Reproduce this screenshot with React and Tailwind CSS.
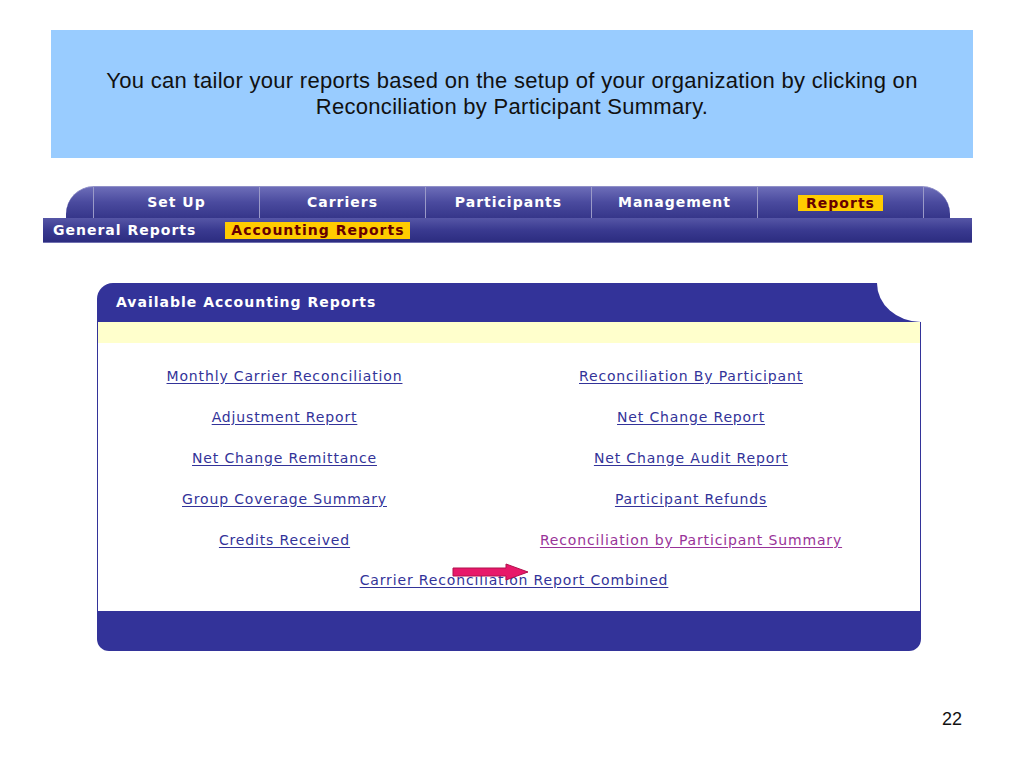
import React from "react";

const tabs = ["Set Up", "Carriers", "Participants", "Management", "Reports"];

const rows = [
  ["Monthly Carrier Reconciliation", "Reconciliation By Participant"],
  ["Adjustment Report", "Net Change Report"],
  ["Net Change Remittance", "Net Change Audit Report"],
  ["Group Coverage Summary", "Participant Refunds"],
  ["Credits Received", "Reconciliation by Participant Summary"],
];

const verdana = { fontFamily: '"DejaVu Sans", Verdana, sans-serif' };

function ReportLink({ children, visited = false }) {
  return (
    <a
      href="#"
      className={`underline underline-offset-2 text-[14px] tracking-[0.85px] ${
        visited ? "text-[#993399]" : "text-[#333399]"
      }`}
    >
      {children}
    </a>
  );
}

export default function App() {
  return (
    <div
      className="w-[1024px] h-[768px] bg-white overflow-hidden flex flex-col pt-[30px]"
      style={{ fontFamily: '"Liberation Sans", Arial, sans-serif' }}
    >
      {/* Slide caption */}
      <div className="ml-[51px] w-[922px] h-[128px] bg-[#99ccff] flex items-center justify-center text-center">
        <p className="text-[22px] leading-[26px] text-[#111] tracking-[0.3px]">
          You can tailor your reports based on the setup of your organization by clicking on
          <br />
          Reconciliation by Participant Summary.
        </p>
      </div>

      {/* Main tabs */}
      <div style={verdana} className="mt-[28px] flex flex-col">
        <div className="ml-[66px] w-[884px] h-[32px] flex rounded-t-[28px] overflow-hidden bg-gradient-to-b from-[#6d6db8] via-[#4a4a9e] to-[#36368a] border-t border-[#9090c8]">
          <div className="w-[27px] shrink-0" />
          {tabs.map((t) => (
            <div
              key={t}
              className="w-[166px] shrink-0 border-l border-[#9a9ac8] flex items-center justify-center"
            >
              {t === "Reports" ? (
                <span className="bg-[#ffcc00] text-[#660000] font-bold text-[14px] tracking-[1px] leading-[16px] px-[8px]">
                  {t}
                </span>
              ) : (
                <span className="text-white font-bold text-[14px] tracking-[1px]">{t}</span>
              )}
            </div>
          ))}
          <div className="flex-1 border-l border-[#9a9ac8]" />
        </div>

        {/* Sub tabs */}
        <div className="ml-[43px] w-[929px] h-[25px] flex items-center bg-gradient-to-b from-[#5656a6] via-[#3a3a90] to-[#2c2c80] border-b border-[#7070b0]">
          <span className="ml-[10px] text-white font-bold text-[14px] tracking-[1px]">
            General Reports
          </span>
          <span className="ml-[29px] w-[185px] h-[17px] bg-[#ffcc00] text-[#660000] font-bold text-[14px] tracking-[1px] leading-[17px] pl-[6px]">
            Accounting Reports
          </span>
        </div>
      </div>

      {/* Reports panel */}
      <div style={verdana} className="mt-[40px] ml-[97px] w-[824px] flex flex-col">
        <div className="relative h-[39px] bg-[#333399] rounded-tl-[16px] overflow-hidden flex items-center pl-[19px]">
          <span className="text-white font-bold text-[14px] tracking-[1px]">
            Available Accounting Reports
          </span>
          <div className="absolute -right-[44px] -top-[39px] w-[88px] h-[78px] rounded-[50%] bg-white" />
        </div>
        <div className="h-[21px] bg-[#ffffcc] border-x border-[#333399]" />
        <div className="border-x border-[#333399] bg-white pt-[12px] pb-[10px]">
          {rows.map(([a, b], i) => (
            <div key={a} className="grid grid-cols-[373px_440px] h-[41px] items-center">
              <div className="text-center">
                <ReportLink>{a}</ReportLink>
              </div>
              <div className="text-center">
                <ReportLink visited={i === 4}>{b}</ReportLink>
              </div>
            </div>
          ))}
          <div className="relative h-[41px] flex items-center justify-center pl-[10px]">
            <ReportLink>Carrier Reconciliation Report Combined</ReportLink>
            <svg
              className="absolute left-[354px] top-[3px]"
              width="78"
              height="18"
              viewBox="0 0 78 18"
            >
              <polygon
                points="1,5 54,5 54,1 76,9 54,17 54,13 1,13"
                fill="#e8186a"
                stroke="#b0104c"
                strokeWidth="1"
              />
            </svg>
          </div>
        </div>
        <div className="h-[40px] bg-[#333399] rounded-b-[12px]" />
      </div>

      <div className="mt-[55px] flex justify-end pr-[62px]">
        <span className="text-[18px] text-[#111]">22</span>
      </div>
    </div>
  );
}
